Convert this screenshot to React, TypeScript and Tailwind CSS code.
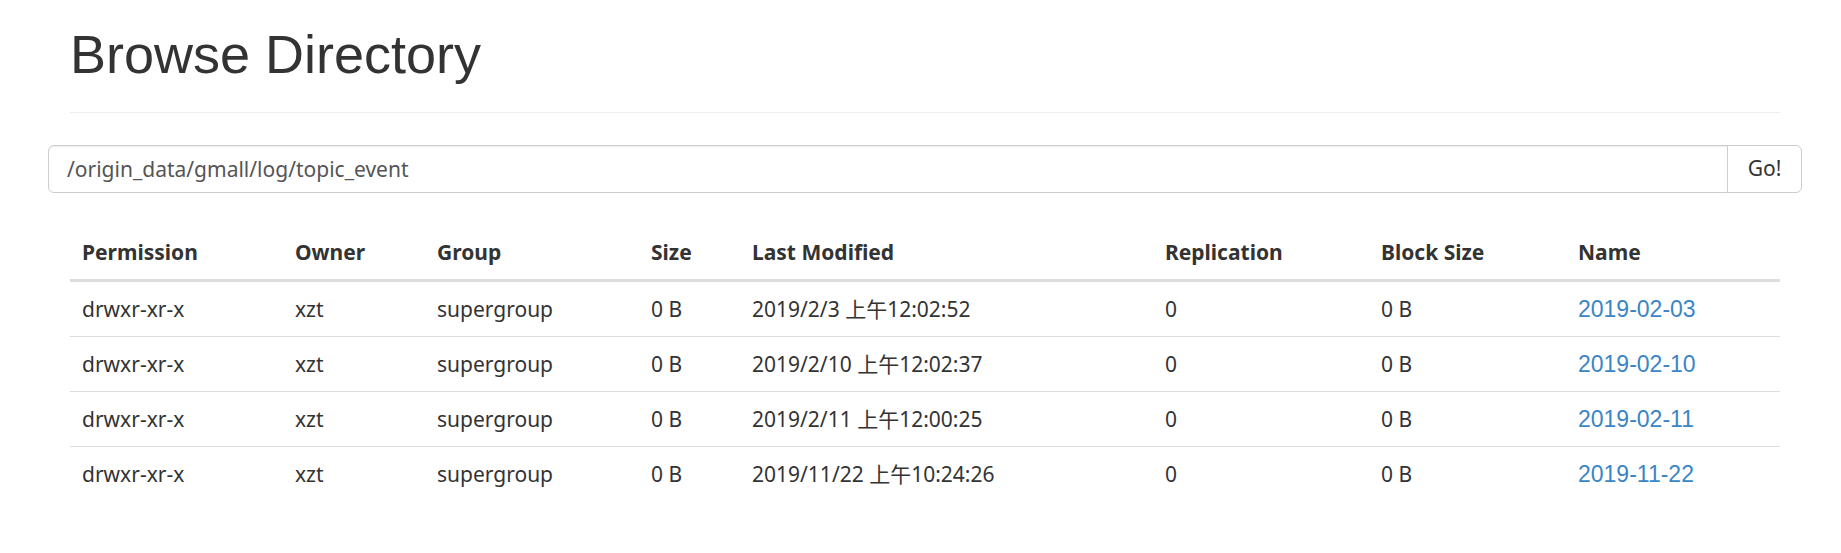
import React from 'react';

type Entry = {
  permission: string;
  owner: string;
  group: string;
  size: string;
  modified: string;
  replication: string;
  blockSize: string;
  name: string;
};

const entries: Entry[] = [
  { permission: 'drwxr-xr-x', owner: 'xzt', group: 'supergroup', size: '0 B', modified: '2019/2/3 上午12:02:52', replication: '0', blockSize: '0 B', name: '2019-02-03' },
  { permission: 'drwxr-xr-x', owner: 'xzt', group: 'supergroup', size: '0 B', modified: '2019/2/10 上午12:02:37', replication: '0', blockSize: '0 B', name: '2019-02-10' },
  { permission: 'drwxr-xr-x', owner: 'xzt', group: 'supergroup', size: '0 B', modified: '2019/2/11 上午12:00:25', replication: '0', blockSize: '0 B', name: '2019-02-11' },
  { permission: 'drwxr-xr-x', owner: 'xzt', group: 'supergroup', size: '0 B', modified: '2019/11/22 上午10:24:26', replication: '0', blockSize: '0 B', name: '2019-11-22' },
];

const th = 'text-left font-bold px-[12px] py-[12px] leading-[30px] border-b-[3px] border-[#ddd]';

function Cell({ first, children }: { first: boolean; children: React.ReactNode }) {
  return (
    <td className={first ? 'px-[12px] py-[12px]' : 'px-[12px] py-[12px] border-t border-[#ddd]'}>
      <div className="h-[30px] leading-[30px] whitespace-nowrap">{children}</div>
    </td>
  );
}

export default function App() {
  return (
    <div className="min-h-screen w-full bg-white text-[#333] font-['Noto_Sans','Noto_Sans_CJK_SC',sans-serif] text-[21px]">
      <div className="pl-[70px] pr-[61px] pt-[25px]">
        {/* Page header */}
        <div className="pb-[28px] border-b border-[#eee]">
          <h1 className="text-[54px] leading-[59px] font-normal text-[#333] font-['Liberation_Sans',Arial,sans-serif]">
            Browse Directory
          </h1>
        </div>

        {/* Path bar */}
        <div className="mt-[32px] -mx-[22px] flex h-[48px]">
          <input
            readOnly
            value="/origin_data/gmall/log/topic_event"
            className="flex-1 min-w-0 h-full border border-[#ccc] rounded-l-[6px] px-[18px] text-[21px] text-[#555] shadow-[inset_0_1px_1px_rgba(0,0,0,0.075)] outline-none bg-white"
          />
          <button className="-ml-px w-[75px] h-full border border-[#ccc] rounded-r-[6px] bg-white text-[21px] text-[#333] flex items-center justify-center">
            Go!
          </button>
        </div>

        {/* Listing */}
        <table className="mt-[32px] w-full table-fixed border-separate border-spacing-0">
          <colgroup>
            <col className="w-[213px]" />
            <col className="w-[142px]" />
            <col className="w-[214px]" />
            <col className="w-[101px]" />
            <col className="w-[413px]" />
            <col className="w-[216px]" />
            <col className="w-[197px]" />
            <col className="w-[214px]" />
          </colgroup>
          <thead>
            <tr>
              <th className={th}>Permission</th>
              <th className={th}>Owner</th>
              <th className={th}>Group</th>
              <th className={th}>Size</th>
              <th className={th}>Last Modified</th>
              <th className={th}>Replication</th>
              <th className={th}>Block Size</th>
              <th className={th}>Name</th>
            </tr>
          </thead>
          <tbody>
            {entries.map((e, i) => (
              <tr key={e.name}>
                <Cell first={i === 0}>{e.permission}</Cell>
                <Cell first={i === 0}>{e.owner}</Cell>
                <Cell first={i === 0}>{e.group}</Cell>
                <Cell first={i === 0}>{e.size}</Cell>
                <Cell first={i === 0}>{e.modified}</Cell>
                <Cell first={i === 0}>{e.replication}</Cell>
                <Cell first={i === 0}>{e.blockSize}</Cell>
                <Cell first={i === 0}>
                  <a href="#" className="text-[#3a85c6] text-[23px] font-['Liberation_Sans',Arial,sans-serif]">
                    {e.name}
                  </a>
                </Cell>
              </tr>
            ))}
          </tbody>
        </table>
      </div>
    </div>
  );
}
